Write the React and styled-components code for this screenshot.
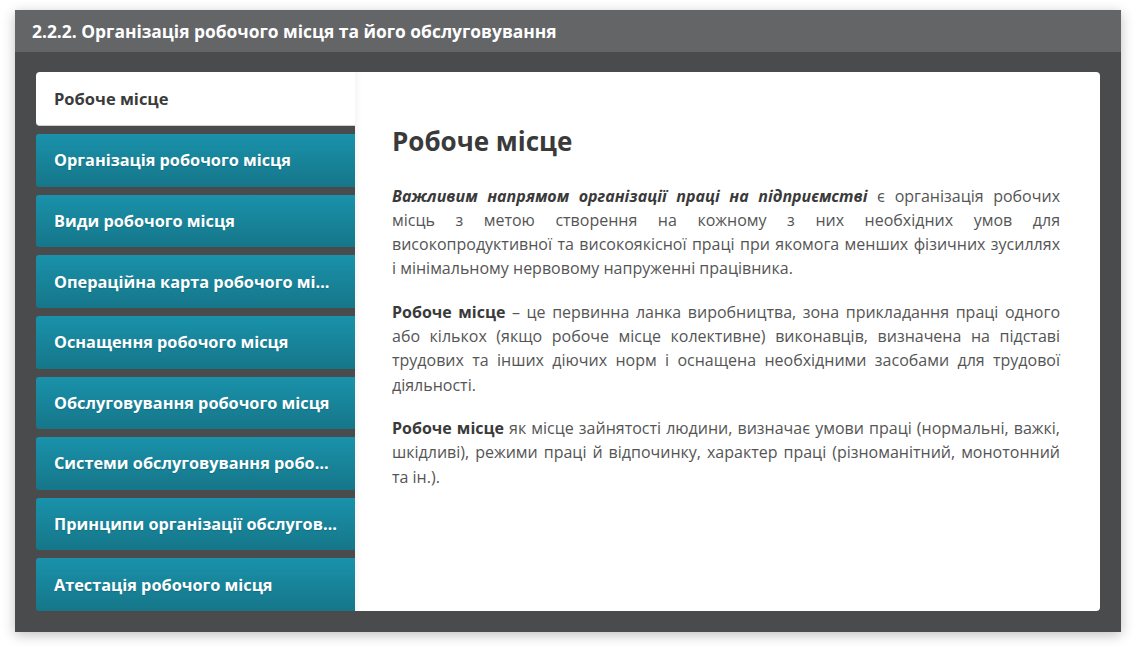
import React from 'react';
import styled, { createGlobalStyle } from 'styled-components';

const GlobalStyle = createGlobalStyle`
  body {
    margin: 0;
    background: #ffffff;
    font-family: "Open Sans", "Noto Sans", sans-serif;
  }
`;

const items = [
  'Організація робочого місця',
  'Види робочого місця',
  'Операційна карта робочого місця',
  'Оснащення робочого місця',
  'Обслуговування робочого місця',
  'Системи обслуговування робочого місця',
  'Принципи організації обслуговування робочого місця',
  'Атестація робочого місця',
];

function App() {
  return (
    <Page>
      <GlobalStyle />
      <Window>
        <TitleBar>2.2.2. Організація робочого місця та його обслуговування</TitleBar>
        <Body>
          <Panel>
            <Sidebar>
              <SideHead>Робоче місце</SideHead>
              {items.map(item => (
                <MenuButton key={item}>
                  <Label>{item}</Label>
                </MenuButton>
              ))}
            </Sidebar>
            <Content>
              <Heading>Робоче місце</Heading>
              <Para>
                <b><i>Важливим напрямом організації праці на підприємстві</i></b> є організація робочих
                місць з метою створення на кожному з них необхідних умов для
                високопродуктивної та високоякісної праці при якомога менших фізичних зусиллях
                і&nbsp;мінімальному нервовому напруженні працівника.
              </Para>
              <Para>
                <b>Робоче місце</b> – це первинна ланка виробництва, зона прикладання праці одного
                або кількох (якщо робоче місце колективне) виконавців, визначена на підставі
                трудових та інших діючих норм і оснащена необхідними засобами для трудової
                діяльності.
              </Para>
              <Para>
                <b>Робоче місце</b> як місце зайнятості людини, визначає умови праці (нормальні, важкі,
                шкідливі), режими праці й відпочинку, характер праці (різноманітний, монотонний
                та ін.).
              </Para>
            </Content>
          </Panel>
        </Body>
      </Window>
    </Page>
  );
}

const Page = styled.div`
  padding: 10px 15px 21px 15px;
`;

const Window = styled.div`
  width: 1106px;
  background: #4a4b4d;
  box-shadow: 0 3px 12px rgba(0, 0, 0, 0.25);
`;

const TitleBar = styled.div`
  height: 42px;
  display: flex;
  align-items: center;
  padding-left: 17px;
  background: #636567;
  color: #ffffff;
  font-size: 17.4px;
  font-weight: 700;
`;

const Body = styled.div`
  padding: 20px 21px 21px 21px;
`;

const Panel = styled.div`
  display: flex;
  height: 539px;
`;

const Sidebar = styled.div`
  width: 319px;
  flex-shrink: 0;
  display: flex;
  flex-direction: column;
  gap: 8px;
`;

const SideHead = styled.div`
  height: 54px;
  flex-shrink: 0;
  display: flex;
  align-items: center;
  padding-left: 18px;
  background: #ffffff;
  border-radius: 4px 0 0 4px;
  border-bottom: 1px solid #cfcfcf;
  box-sizing: border-box;
  color: #3b3b3b;
  font-size: 16.5px;
  font-weight: 700;
`;

const MenuButton = styled.div`
  flex: 1;
  display: flex;
  align-items: center;
  padding: 0 18px;
  min-width: 0;
  background: linear-gradient(to bottom, #1992ab, #167689);
  border-radius: 3px 0 0 3px;
  color: #ffffff;
  font-size: 16.3px;
  font-weight: 700;
  cursor: pointer;
`;

const Label = styled.span`
  white-space: nowrap;
  overflow: hidden;
  text-overflow: ellipsis;
  text-shadow: 0 1px 1px rgba(0, 0, 0, 0.15);
`;

const Content = styled.div`
  flex: 1;
  background: #ffffff;
  border-radius: 0 4px 4px 0;
  padding: 49px 40px 0 37px;
  box-shadow: inset 8px 0 8px -8px rgba(0, 0, 0, 0.08);
  color: #555555;
`;

const Heading = styled.h1`
  margin: 0 0 21px 0;
  font-size: 26px;
  font-weight: 700;
  color: #3a3a3a;
  line-height: 1.6;
`;

const Para = styled.p`
  margin: 0 0 19px 0;
  font-size: 16px;
  line-height: 24.3px;
  text-align: justify;

  b {
    color: #3a3a3a;
  }
`;

export default App;
